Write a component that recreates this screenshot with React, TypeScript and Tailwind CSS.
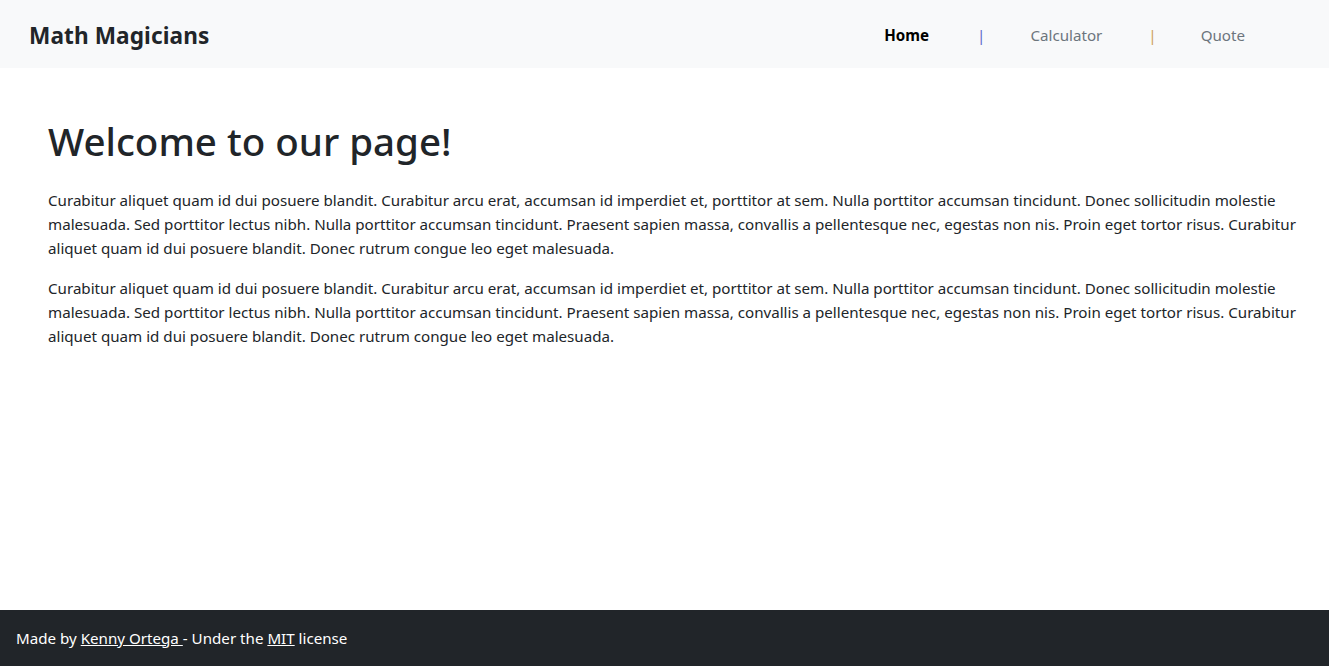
const para =
  "Curabitur aliquet quam id dui posuere blandit. Curabitur arcu erat, accumsan id imperdiet et, porttitor at sem. Nulla porttitor accumsan tincidunt. Donec sollicitudin molestie malesuada. Sed porttitor lectus nibh. Nulla porttitor accumsan tincidunt. Praesent sapien massa, convallis a pellentesque nec, egestas non nis. Proin eget tortor risus. Curabitur aliquet quam id dui posuere blandit. Donec rutrum congue leo eget malesuada.";

export default function App() {
  return (
    <div className="min-h-screen flex flex-col bg-white text-[#212529] font-['Noto_Sans',sans-serif]">
      <header className="h-[68px] bg-[#f8f9fa] flex items-center justify-between pl-[29px] pr-[84px] pt-1">
        <h2 className="text-[22.6px] font-bold leading-none tracking-[0.1px] text-[#212529]">Math Magicians</h2>
        <nav className="flex items-center text-[15.15px] leading-none">
          <a className="font-bold text-black mr-[48px]">Home</a>
          <span className="text-[#5f67c8] mr-[45px]">|</span>
          <a className="text-[#6c757d] mr-[46px]">Calculator</a>
          <span className="text-[#cf9f55] mr-[44px]">|</span>
          <a className="text-[#6c757d]">Quote</a>
        </nav>
      </header>
      <main className="pt-[49px] pl-12 pr-[28px]">
        <h1 className="text-[38.5px] font-medium leading-[48px] mb-[23px]">Welcome to our page!</h1>
        <p className="text-[15.15px] leading-6 mb-4">{para}</p>
        <p className="text-[15.15px] leading-6 mb-4">{para}</p>
      </main>
      <footer className="mt-auto h-14 bg-[#212529] text-white flex items-center px-4 text-[15.15px]">
        <p>
          Made by <a className="underline">Kenny Ortega </a>- Under the <a className="underline">MIT</a> license
        </p>
      </footer>
    </div>
  );
}
